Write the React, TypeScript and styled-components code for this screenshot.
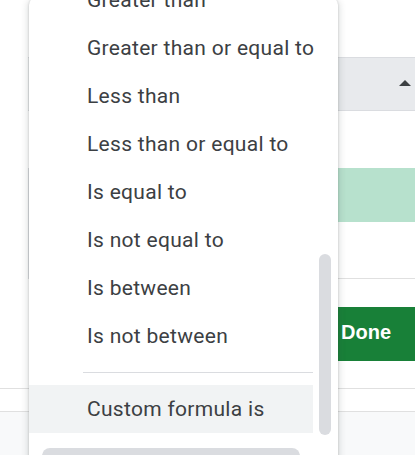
import React from 'react'
import styled, { createGlobalStyle } from 'styled-components'

const conditions = [
  'Greater than',
  'Greater than or equal to',
  'Less than',
  'Less than or equal to',
  'Is equal to',
  'Is not equal to',
  'Is between',
  'Is not between',
]

export default function App() {
  return (
    <Page>
      <GlobalStyle />
      <Sidebar>
        <Content>
          <HeaderBar>
            <Caret />
          </HeaderBar>
          <StyleCard>
            <Preview />
          </StyleCard>
          <ButtonRow>
            <DoneButton>Done</DoneButton>
          </ButtonRow>
        </Content>
      </Sidebar>
      <RuleStrip />
      <Footer />

      <Menu>
        <MenuBody>
          <List>
            {conditions.map((label) => (
              <Item key={label}>{label}</Item>
            ))}
            <Separator />
            <Item $active>Custom formula is</Item>
          </List>
          <Track>
            <Thumb />
          </Track>
        </MenuBody>
        <HScroll />
      </Menu>
    </Page>
  )
}

const GlobalStyle = createGlobalStyle`
  html, body {
    margin: 0;
    padding: 0;
    overflow: hidden;
    background: #fff;
  }
  * {
    box-sizing: border-box;
  }
`

const Page = styled.div`
  position: relative;
  width: 415px;
  height: 455px;
  overflow: hidden;
  display: flex;
  flex-direction: column;
  background: #fff;
  font-family: Roboto, 'Liberation Sans', Arial, sans-serif;
`

const Sidebar = styled.div`
  height: 388px;
  flex-shrink: 0;
`

const Content = styled.div`
  margin-left: 28px;
  display: flex;
  flex-direction: column;
`

const HeaderBar = styled.div`
  margin-top: 57px;
  height: 54px;
  background: #e8eaed;
  border-top: 1px solid #dadce0;
  border-bottom: 1px solid #dadce0;
  display: flex;
  align-items: center;
  justify-content: flex-end;
  padding-right: 4px;
`

const Caret = styled.span`
  width: 0;
  height: 0;
  border-left: 6px solid transparent;
  border-right: 6px solid transparent;
  border-bottom: 6px solid #3c4043;
  margin-top: -2px;
`

const StyleCard = styled.div`
  margin-top: 57px;
  height: 111px;
  border-left: 1px solid #dadce0;
  border-bottom: 1px solid #e0e0e0;
`

const Preview = styled.div`
  height: 54px;
  background: #b7e1cd;
`

const ButtonRow = styled.div`
  margin-top: 28px;
  display: flex;
  justify-content: flex-end;
`

const DoneButton = styled.button`
  width: 97px;
  height: 54px;
  border: none;
  border-radius: 0;
  background: #188038;
  color: #fff;
  font-family: 'Liberation Sans', Arial, sans-serif;
  font-size: 20px;
  font-weight: 700;
  text-align: left;
  padding: 0 0 4px 23px;
`

const RuleStrip = styled.div`
  height: 24px;
  flex-shrink: 0;
  border-top: 1px solid #e0e0e0;
  border-bottom: 1px solid #e0e0e0;
  background: #fff;
`

const Footer = styled.div`
  flex: 1;
  background: #f8f9fa;
`

const Menu = styled.div`
  position: absolute;
  left: 29px;
  top: -3px;
  width: 309px;
  bottom: -30px;
  background: #fff;
  border-radius: 8px;
  box-shadow: 0 1px 2px 0 rgba(60, 64, 67, 0.3), 0 2px 6px 2px rgba(60, 64, 67, 0.15);
  overflow: hidden;
  display: flex;
  flex-direction: column;
`

const MenuBody = styled.div`
  display: flex;
  align-items: flex-start;
`

const List = styled.div`
  width: 284px;
  margin-top: -21px;
  display: flex;
  flex-direction: column;
`

const Item = styled.div<{ $active?: boolean }>`
  height: 48px;
  line-height: 48px;
  padding-left: 58px;
  font-size: 21px;
  letter-spacing: 0.3px;
  color: #3c4043;
  white-space: nowrap;
  background: ${({ $active }) => ($active ? '#f1f3f4' : 'transparent')};
`

const Separator = styled.div`
  height: 1px;
  margin: 12px 0 12px 54px;
  background: #dadce0;
`

const Track = styled.div`
  width: 25px;
  padding-left: 6px;
`

const Thumb = styled.div`
  margin-top: 257px;
  width: 12px;
  height: 181px;
  border-radius: 6px;
  background: #dadce0;
`

const HScroll = styled.div`
  margin: 13px 0 0 13px;
  width: 258px;
  height: 24px;
  border-radius: 8px;
  background: #dadce0;
`
